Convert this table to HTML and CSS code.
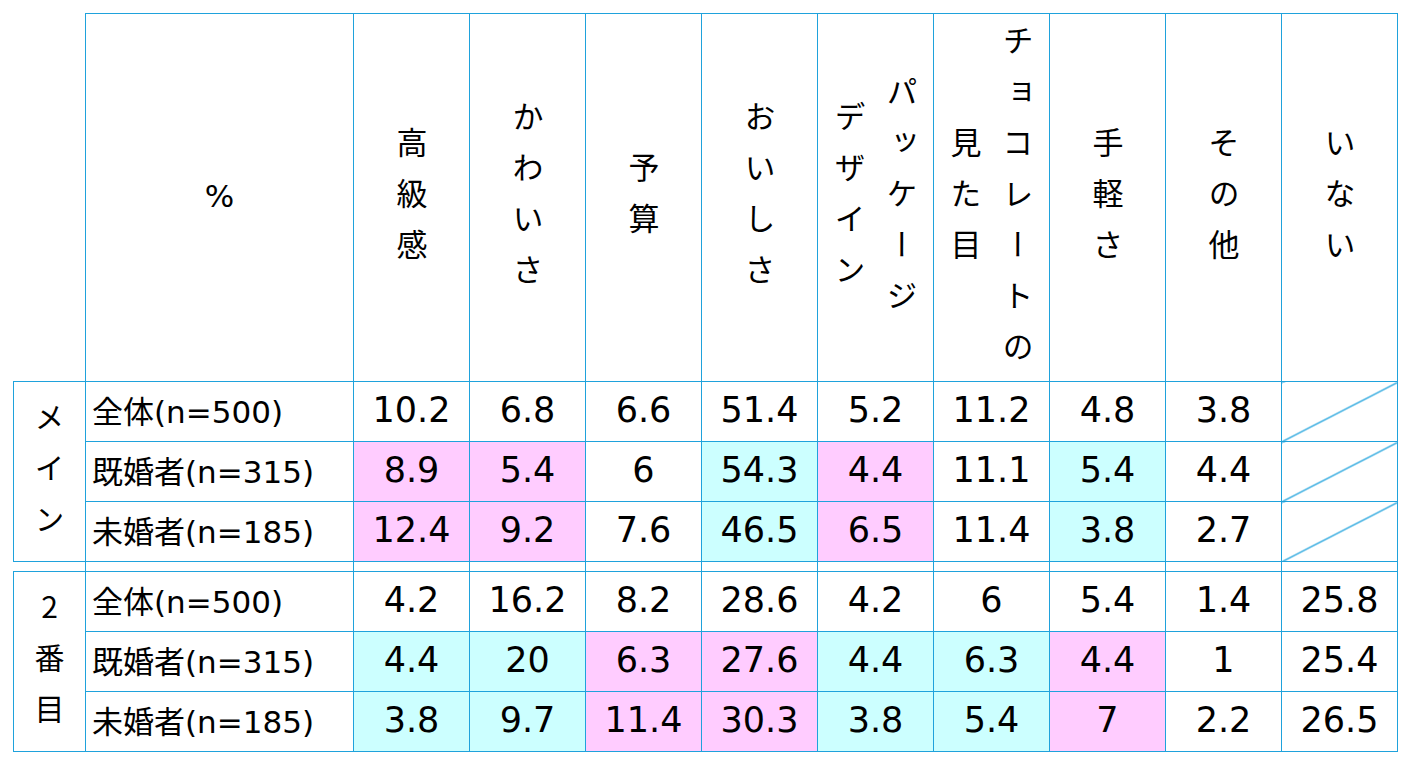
FILE: index.html
```html
<!DOCTYPE html>
<html lang="ja">
<head>
<meta charset="utf-8">
<title>チョコレート選択理由</title>
<link rel="stylesheet" href="styles.css">
</head>
<body>
<table class="grid">
  <colgroup>
    <col class="c-grp"><col class="c-lbl">
    <col class="c-val"><col class="c-val"><col class="c-val"><col class="c-val"><col class="c-val"><col class="c-val"><col class="c-val"><col class="c-val"><col class="c-val">
  </colgroup>
  <tr class="head">
    <td class="corner"></td>
    <td class="pct">%</td>
    <td><div class="vt"><span>高級感</span></div></td>
    <td><div class="vt"><span>かわいさ</span></div></td>
    <td><div class="vt"><span>予算</span></div></td>
    <td><div class="vt"><span>おいしさ</span></div></td>
    <td><div class="vt"><span>パッケージ</span><br><span>デザイン</span></div></td>
    <td><div class="vt"><span>チョコレートの</span><br><span>見た目</span></div></td>
    <td><div class="vt"><span>手軽さ</span></div></td>
    <td><div class="vt"><span>その他</span></div></td>
    <td><div class="vt"><span>いない</span></div></td>
  </tr>
  <tr class="row">
    <td class="grp" rowspan="3"><div class="vg"><span>メイン</span></div></td>
    <td class="lbl">全体(n=500)</td>
    <td class="num">10.2</td><td class="num">6.8</td><td class="num">6.6</td><td class="num">51.4</td><td class="num">5.2</td><td class="num">11.2</td><td class="num">4.8</td><td class="num">3.8</td><td class="num diag"></td>
  </tr>
  <tr class="row">
    <td class="lbl">既婚者(n=315)</td>
    <td class="num pink">8.9</td><td class="num pink">5.4</td><td class="num">6</td><td class="num cyan">54.3</td><td class="num pink">4.4</td><td class="num">11.1</td><td class="num cyan">5.4</td><td class="num">4.4</td><td class="num diag"></td>
  </tr>
  <tr class="row">
    <td class="lbl">未婚者(n=185)</td>
    <td class="num pink">12.4</td><td class="num pink">9.2</td><td class="num">7.6</td><td class="num cyan">46.5</td><td class="num pink">6.5</td><td class="num">11.4</td><td class="num cyan">3.8</td><td class="num">2.7</td><td class="num diag"></td>
  </tr>
  <tr class="gap">
    <td class="gap-first"></td><td></td><td></td><td></td><td></td><td></td><td></td><td></td><td></td><td></td><td></td>
  </tr>
  <tr class="row">
    <td class="grp" rowspan="3"><div class="vg"><span>2番目</span></div></td>
    <td class="lbl">全体(n=500)</td>
    <td class="num">4.2</td><td class="num">16.2</td><td class="num">8.2</td><td class="num">28.6</td><td class="num">4.2</td><td class="num">6</td><td class="num">5.4</td><td class="num">1.4</td><td class="num">25.8</td>
  </tr>
  <tr class="row">
    <td class="lbl">既婚者(n=315)</td>
    <td class="num cyan">4.4</td><td class="num cyan">20</td><td class="num pink">6.3</td><td class="num pink">27.6</td><td class="num cyan">4.4</td><td class="num cyan">6.3</td><td class="num pink">4.4</td><td class="num">1</td><td class="num">25.4</td>
  </tr>
  <tr class="row">
    <td class="lbl">未婚者(n=185)</td>
    <td class="num cyan">3.8</td><td class="num cyan">9.7</td><td class="num pink">11.4</td><td class="num pink">30.3</td><td class="num cyan">3.8</td><td class="num cyan">5.4</td><td class="num pink">7</td><td class="num">2.2</td><td class="num">26.5</td>
  </tr>
</table>
</body>
</html>
```

FILE: styles.css
```css
html, body {
  margin: 0;
  padding: 0;
  background: #ffffff;
}

body {
  padding: 13px 0 0 13px;
  font-family: "DejaVu Sans", "Noto Sans CJK JP", sans-serif;
  color: #000000;
}

.grid {
  border-collapse: collapse;
  table-layout: fixed;
  width: 1385px;
}

.c-grp { width: 72px; }
.c-lbl { width: 268px; }
.c-val { width: 116px; }

.grid td {
  border: 1px solid #1fa2dc;
  padding: 0;
}

.head td {
  height: 367px;
  text-align: center;
  vertical-align: middle;
}

.grid td.corner {
  border-top: none;
  border-left: none;
}

.grid td.pct {
  font-size: 31px;
  height: 363px;
  padding-bottom: 4px;
}

.vt {
  writing-mode: vertical-rl;
  text-orientation: mixed;
  font-family: "Noto Sans CJK JP", sans-serif;
  font-size: 31px;
  line-height: 52px;
  letter-spacing: 20px;
  text-align: center;
  white-space: nowrap;
  box-sizing: border-box;
  height: 367px;
  padding-bottom: 9px;
  margin: 0 auto;
  width: max-content;
}

.vt span,
.vg span {
  margin-inline-end: -20px;
}

.row td {
  height: 59px;
}

.grp {
  text-align: center;
  vertical-align: middle;
}

.vg {
  writing-mode: vertical-rl;
  text-orientation: upright;
  font-family: "Noto Sans CJK JP", sans-serif;
  font-size: 30px;
  line-height: 52px;
  letter-spacing: 21px;
  text-align: center;
  white-space: nowrap;
  box-sizing: border-box;
  padding-bottom: 6px;
  margin: 0 auto;
  width: max-content;
}

.grid .row td.lbl {
  font-size: 31px;
  height: 54px;
  padding-left: 6px;
  padding-bottom: 5px;
  white-space: nowrap;
  vertical-align: middle;
}

.grid .row td.num {
  font-size: 35px;
  text-align: center;
  vertical-align: middle;
  height: 56px;
  padding-bottom: 3px;
}

.grid td.pink { background: #ffccff; }
.grid td.cyan { background: #ccffff; }

.grid td.diag {
  background: linear-gradient(to bottom right,
    transparent calc(50% - 1px),
    #1fa2dc calc(50% - 0.3px),
    #1fa2dc calc(50% + 0.3px),
    transparent calc(50% + 1px));
}

.gap td {
  height: 9px;
}

.grid td.gap-first {
  border-left: none;
}
```
